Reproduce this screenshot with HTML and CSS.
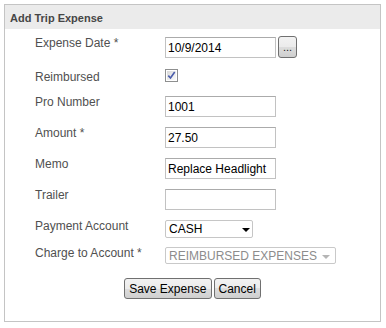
FILE: index.html
```html
<!DOCTYPE html>
<html lang="en">
<head>
  <meta charset="UTF-8" />
  <title>Add Trip Expense</title>
  <link rel="stylesheet" href="styles.css">
</head>
<body>
  <div class="panel">
    <div class="panel-head">Add Trip Expense</div>
    <form class="panel-body" id="expense-form">
      <div class="row row-date">
        <label for="exp_date">Expense Date *</label>
        <div class="field">
          <input type="text" id="exp_date" class="text" value="10/9/2014" />
          <button type="button" class="btn btn-pick">...</button>
        </div>
      </div>
      <div class="row row-check">
        <label>Reimbursed</label>
        <div class="field">
          <span class="check">
            <svg width="13" height="13" viewBox="0 0 13 13">
              <defs>
                <linearGradient id="cb" x1="0" y1="0" x2="1" y2="1">
                  <stop offset="0" stop-color="#d8d8d8"/>
                  <stop offset="1" stop-color="#fbfbfb"/>
                </linearGradient>
              </defs>
              <rect x="0.5" y="0.5" width="12" height="12" fill="#fff" stroke="#8e8f8f"/>
              <rect x="2" y="2" width="9" height="9" fill="url(#cb)"/>
              <path d="M3.3 6.6 L5.5 9 L9.7 3" fill="none" stroke="#4a5cab" stroke-width="1.6"/>
            </svg>
          </span>
        </div>
      </div>
      <div class="row">
        <label for="pro_number">Pro Number</label>
        <div class="field"><input type="text" id="pro_number" class="text" value="1001" /></div>
      </div>
      <div class="row">
        <label for="amount">Amount *</label>
        <div class="field"><input type="text" id="amount" class="text" value="27.50" /></div>
      </div>
      <div class="row">
        <label for="memo">Memo</label>
        <div class="field"><input type="text" id="memo" class="text" value="Replace Headlight" /></div>
      </div>
      <div class="row">
        <label for="trailer">Trailer</label>
        <div class="field"><input type="text" id="trailer" class="text" value="" /></div>
      </div>
      <div class="row row-select">
        <label for="pay_account">Payment Account</label>
        <div class="field">
          <span class="select select-cash">
            <select id="pay_account">
              <option>CASH</option>
              <option>CHECK</option>
            </select>
          </span>
        </div>
      </div>
      <div class="row">
        <label for="charge_account">Charge to Account *</label>
        <div class="field">
          <span class="select select-charge is-disabled">
            <select id="charge_account" disabled>
              <option>REIMBURSED EXPENSES</option>
            </select>
          </span>
        </div>
      </div>
      <div class="actions">
        <button type="submit" class="btn">Save Expense</button>
        <button type="button" class="btn">Cancel</button>
      </div>
    </form>
  </div>
</body>
</html>
```

FILE: styles.css
```css
body { margin: 4px 0 0 4px; font-family: "Liberation Sans", Arial, sans-serif; font-size: 12px; color: #505050; background: #fff; }
.panel { width: 377px; border: 1px solid #c4c4c4; box-sizing: border-box; }
.panel-head { height: 24px; box-sizing: border-box; padding: 7px 5px 5px; line-height: 12px; font-size: 11px; font-weight: bold; color: #464646; background: #ebebeb; }
.panel-body { margin: 0; padding: 8px 0 22px 30px; }

.row { display: grid; grid-template-columns: 130px auto; align-items: start; height: 31px; }
.row-date { height: 33px; }
.row-check { height: 26px; }
.row-select { height: 27px; }
.row label { line-height: 12px; padding-top: 0; }
.row-check label { padding-top: 1px; }
.field { display: flex; align-items: flex-start; gap: 2px; }

.text { width: 111px; height: 21px; box-sizing: border-box; margin: 0; padding: 0 2px; border: 1px solid #c2c2c2; border-top-color: #ababab; font: 12px "Liberation Sans", Arial, sans-serif; color: #000; background: #fff; outline: none; }

.check { display: block; width: 13px; height: 13px; margin-top: -1px; }
.check svg { display: block; }

.select { position: relative; display: block; }
.select select { appearance: none; -webkit-appearance: none; margin: 0; padding: 0 14px 0 3px; box-sizing: border-box; font: 12px "Liberation Sans", Arial, sans-serif; color: #000; background: #fff; border: 1px solid #c6c6c6; border-radius: 2px; outline: none; }
.select::after { content: ""; position: absolute; top: 8px; border-left: 4px solid transparent; border-right: 4px solid transparent; border-top: 4px solid #000; }
.select-cash select { width: 88px; height: 18px; }
.select-cash::after { left: 77px; }
.select-charge select { width: 171px; height: 17px; }
.select-charge::after { left: 157px; }
.is-disabled select { color: #8c8c8c; border-color: #c9c9c9; opacity: 1; }
.is-disabled::after { border-top-color: #b5b5b5; }

.btn { height: 21px; margin: 0; padding: 0 4px; box-sizing: border-box; font: 12px "Liberation Sans", Arial, sans-serif; color: #000; border: 1px solid #707070; border-radius: 3px; background: linear-gradient(#f2f2f2, #ebebeb 50%, #dddddd 50%, #cfcfcf); cursor: pointer; }
.btn-pick { width: 19px; height: 22px; margin-top: -1px; padding: 0; font-size: 11px; line-height: 18px; color: #222; }

.actions { display: flex; justify-content: center; gap: 2px; padding-right: 30px; }
```
